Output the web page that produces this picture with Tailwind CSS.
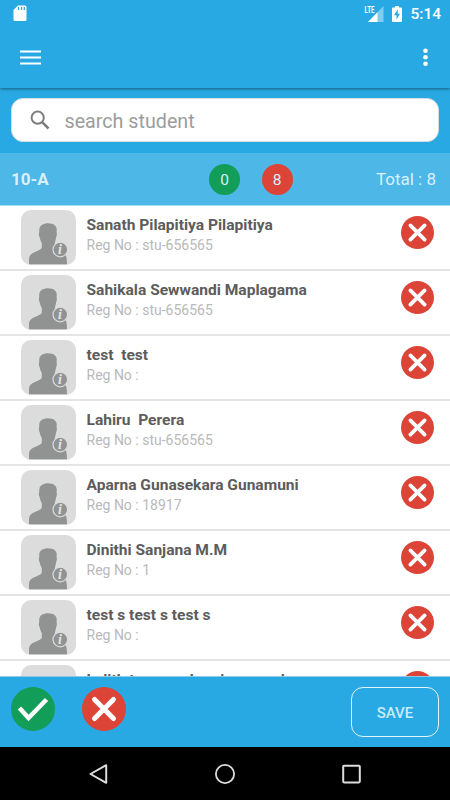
<!DOCTYPE html>
<html lang="en">
<head>
  <meta charset="UTF-8" />
  <meta name="viewport" content="width=device-width, initial-scale=1.0" />
  <title>Student Attendance</title>
  <script src="https://cdn.jsdelivr.net/npm/@tailwindcss/browser@4"></script>
</head>
<body class="bg-white font-[Roboto,sans-serif]">
  <!-- Shared icons -->
  <svg class="hidden">
    <symbol id="cross" viewBox="0 0 44 44">
      <circle cx="22" cy="22" r="22" fill="#dc4437" />
      <path d="M12.500 12.500L31.500 31.500M31.500 12.500L12.500 31.500" stroke="#fff" stroke-width="5" stroke-linecap="round" />
    </symbol>
    <symbol id="avatar" viewBox="0 0 55 55">
      <rect width="55" height="55" rx="10" fill="#dcdcdc" />
      <path d="M8 54.300V50C8 46 9.500 44 13 42.500C17 40.500 20.500 39.500 20.800 37.500V33C19.500 31 19 29 18.600 27C17.700 26 17.700 23 18.300 21.500C17.800 17 20 14.500 23 14C25 12.800 32 13 34 15.500C36 17.500 36 20 35.500 22C36.200 23 35.800 26 35.200 27C34.700 29 34.500 31 33.800 33V37.500C34.500 39.500 38 40.500 41.500 42C45 43.500 46 47 46 54.300Z" fill="#919392" />
      <circle cx="39.300" cy="39.500" r="7.300" fill="#919392" stroke="#dcdcdc" stroke-width="1.200" />
      <text x="39" y="44" text-anchor="middle" font-family="Liberation Serif, serif" font-size="14" font-style="italic" font-weight="bold" fill="#e4e4e4">i</text>
    </symbol>
  </svg>

  <div class="flex h-[800px] w-[450px] flex-col overflow-hidden">
    <!-- Status bar + toolbar -->
    <header class="z-10 h-[88px] shrink-0 bg-[#29a9e3] shadow-[0_1px_3px_rgba(0,0,0,0.45)]">
      <div class="flex h-7 items-center pr-[9px] pl-[13px] text-white">
        <svg class="-mt-[2px] h-[17px] w-[14px]" viewBox="0 0 14 17">
          <path d="M5 .5H12Q13.500 .5 13.500 2V14.500Q13.500 16 12 16H2Q.5 16 .5 14.500V5Z" fill="#fff" />
          <path d="M5.500 2V5M8.500 2V5M11.300 2V5" stroke="#29a9e3" stroke-width="1.300" />
        </svg>
        <svg class="-mt-px ml-auto h-4 w-[20px]" viewBox="0 0 20 16">
          <path d="M19.500 0V16H4Z" fill="#7fccef" />
          <path d="M0 0H11V8H0Z" fill="#29a9e3" />
          <path d="M13.500 6.200V16H4Z" fill="#fff" />
          <text x="0.500" y="7.200" font-size="9" font-weight="bold" textLength="10" lengthAdjust="spacingAndGlyphs" fill="#fff">LTE</text>
        </svg>
        <svg class="-mt-px ml-2 h-4 w-[10px]" viewBox="0 0 10 16">
          <path d="M3 0H7V1.500H9Q10 1.500 10 2.500V15Q10 16 9 16H1Q0 16 0 15V2.500Q0 1.500 1 1.500H3Z" fill="#fff" />
          <path d="M5.800 3.500L2 9.200H4.500V13.500L8 7.700H5.800Z" fill="#29a9e3" />
        </svg>
        <span class="ml-[8px] text-[15.5px] leading-7 font-medium">5:14</span>
      </div>
      <div class="flex h-[59px] items-center justify-between pr-[22px] pl-5">
        <svg class="-mt-px h-[15px] w-[21px]" viewBox="0 0 21 15">
          <path d="M0 1.500H21M0 7.500H21M0 13.500H21" stroke="#fff" stroke-width="2" />
        </svg>
        <svg class="-mt-[2px] h-5 w-[5px]" viewBox="0 0 5 20" fill="#fff">
          <circle cx="2.500" cy="3.700" r="2.300" />
          <circle cx="2.500" cy="10.200" r="2.300" />
          <circle cx="2.500" cy="16.700" r="2.300" />
        </svg>
      </div>
    </header>

    <!-- Search -->
    <div class="h-[65px] shrink-0 bg-[#29a9e3] px-[11px] pt-[10px]">
      <div class="flex h-11 items-center rounded-xl border border-[#d5dade] bg-white pl-[18px]">
        <svg class="h-5 w-5" viewBox="0 0 20 20" fill="none" stroke="#7d7d7d">
          <circle cx="7.700" cy="7.700" r="6.100" stroke-width="2" />
          <path d="M12.200 12.200L18.500 18.500" stroke-width="2.500" />
        </svg>
        <span class="ml-[14.5px] pt-[3px] text-[19.7px] text-[#9c9c9c]">search student</span>
      </div>
    </div>

    <!-- Class totals -->
    <div class="flex h-[53px] shrink-0 items-center border-b border-[#a9dcf3] bg-[#4db7e7] pt-px pr-[14px] pl-[11px] text-[#d9f0fb]">
      <span class="w-[198px] text-[17px] font-bold">10-A</span>
      <span class="flex size-[31px] items-center justify-center rounded-full bg-[#129d58] pt-[2px] text-[15.5px]">0</span>
      <span class="ml-[21.5px] flex size-[31px] items-center justify-center rounded-full bg-[#dc4437] pt-[2px] text-[15.5px]">8</span>
      <span class="ml-auto text-[17px]">Total : 8</span>
    </div>

    <!-- Students -->
    <ul id="studentList" class="h-[470px] shrink-0 overflow-hidden"></ul>

    <!-- Actions -->
    <div class="flex h-[71px] shrink-0 items-start border-t border-[#8ccbea] bg-[#29a9e3] pt-[10px] pr-[11px] pl-[11px]">
      <svg class="size-11" viewBox="0 0 44 44">
        <circle cx="22" cy="22" r="22" fill="#129d58" />
        <path d="M8.500 21L17.500 31L35.500 12.500" fill="none" stroke="#fff" stroke-width="4.500" />
      </svg>
      <svg class="ml-[26.5px] size-11"><use href="#cross" /></svg>
      <button class="ml-auto h-[50px] w-[88px] rounded-xl border border-[#e4f5fc] pt-[2px] text-[15px] font-medium text-[#c9ebfa]">SAVE</button>
    </div>

    <!-- Navigation bar -->
    <nav class="flex h-[53px] shrink-0 items-center justify-between bg-black px-[89px]">
      <svg class="size-5" viewBox="0 0 20 20"><path d="M17.200 1.200V18.800L1.500 10Z" fill="none" stroke="#ddd" stroke-width="2" stroke-linejoin="round" /></svg>
      <svg class="size-5" viewBox="0 0 20 20"><circle cx="10" cy="10" r="9.100" fill="none" stroke="#ddd" stroke-width="1.800" /></svg>
      <svg class="size-5" viewBox="0 0 20 20"><rect x="2.200" y="1.800" width="16.600" height="16.600" rx="0.800" fill="none" stroke="#ddd" stroke-width="2" /></svg>
    </nav>
  </div>

  <script>
    const students = [
      { name: 'Sanath Pilapitiya Pilapitiya', reg: 'stu-656565' },
      { name: 'Sahikala Sewwandi Maplagama', reg: 'stu-656565' },
      { name: 'test  test', reg: '' },
      { name: 'Lahiru  Perera', reg: 'stu-656565' },
      { name: 'Aparna Gunasekara Gunamuni', reg: '18917' },
      { name: 'Dinithi Sanjana M.M', reg: '1' },
      { name: 'test s test s test s', reg: '' },
      { name: 'Lalith tenuwar kumi namaral', reg: '' },
    ];

    const studentList = document.getElementById('studentList');

    students.forEach(student => {
      const li = document.createElement('li');
      li.className = 'flex h-[65px] items-start border-b-2 border-[#e4e4e4] pt-1 pr-4 pl-[21px]';
      li.innerHTML = `
        <svg class="size-[55px]"><use href="#avatar" /></svg>
        <div class="ml-[10.5px] pt-[5px]">
          <p class="text-[15.55px] leading-5 font-bold whitespace-pre text-[#5c5c5c]">${student.name}</p>
          <p class="text-[14px] leading-5 whitespace-pre text-[#b9b9b9]">Reg No : ${student.reg}</p>
        </div>
        <svg class="mt-[6px] ml-auto size-[33px]"><use href="#cross" /></svg>`;
      studentList.appendChild(li);
    });
  </script>
</body>
</html>
